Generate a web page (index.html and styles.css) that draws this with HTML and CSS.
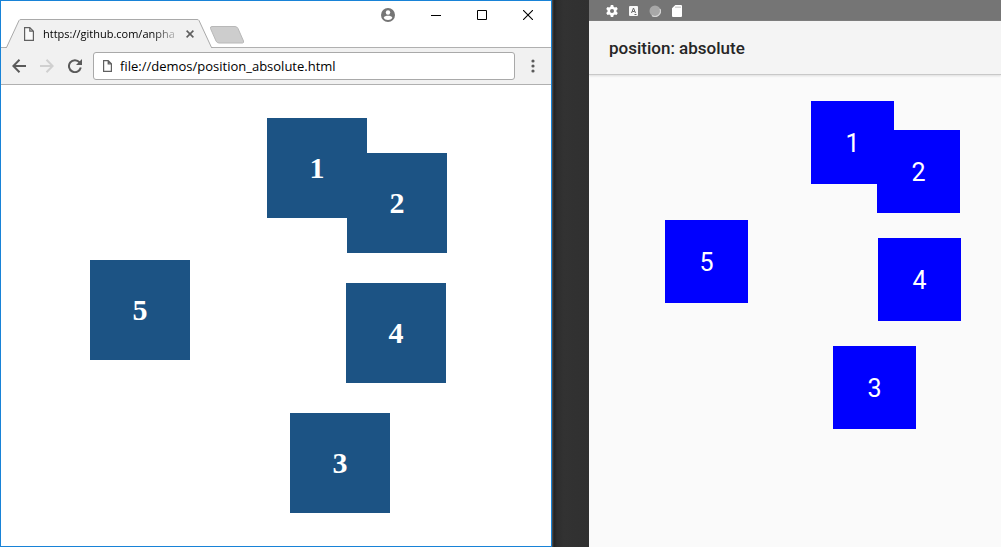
FILE: index.html
```html
<!DOCTYPE html>
<html lang="en">
<head>
<meta charset="utf-8">
<title>position: absolute</title>
<link rel="stylesheet" href="styles.css">
</head>
<body>
<main class="desktop">
  <section class="browser" aria-label="Browser">
    <header class="titlebar">
      <div class="tab">
        <svg class="tab-shape" width="208" height="29" viewBox="0 0 208 29" aria-hidden="true">
          <path d="M0 28.5H1.5L14 1.5Q14.5 .5 16 .5H192Q193.500 .5 194 1.500L206.500 28.500H208" fill="#f1f1f1" stroke="#a9a9a9"/>
          <path d="M2 28.500H206" stroke="#f1f1f1"/>
        </svg>
        <svg class="page-icon" width="10" height="14" viewBox="0 0 10 14" aria-hidden="true"><path d="M.6 .6H5.800L9.400 4.200V13.400H.6ZM5.800 .6V4.200H9.400" fill="#fafafa" stroke="#606060" stroke-width="1.200"/></svg>
        <span class="tab-title">https://github.com/anpha</span>
        <button class="icon-button tab-close" aria-label="Close tab"><svg width="8" height="8" viewBox="0 0 8 8"><path d="M.6 .6L7.400 7.400M7.400 .6L.6 7.400" stroke="#5f5f5f" stroke-width="1.600"/></svg></button>
      </div>
      <button class="icon-button new-tab" aria-label="New tab"><svg width="36" height="18" viewBox="0 0 36 18"><path d="M3 .5H26Q28 .5 29 2.500L34.500 15Q35 17 33.500 17H10Q8 17 7 15L1.500 2.500Q1 .5 3 .5Z" fill="#cdcdcd" stroke="#b8b8b8"/></svg></button>
      <div class="window-controls">
        <button class="icon-button control profile" aria-label="Profile"><svg width="14" height="14" viewBox="0 0 14 14"><circle cx="7" cy="7" r="7" fill="#757575"/><circle cx="7" cy="4.500" r="2.200" fill="#fff"/><path d="M2.700 9.800C3 8.200 5.200 7.800 7 7.800S11 8.200 11.300 9.800C10.500 11.200 9 12 7 12S3.500 11.200 2.700 9.800Z" fill="#fff"/></svg></button>
        <button class="icon-button control" aria-label="Minimize"><svg width="10" height="10" viewBox="0 0 10 10"><path d="M0 5.500H10" stroke="#000"/></svg></button>
        <button class="icon-button control" aria-label="Maximize"><svg width="10" height="10" viewBox="0 0 10 10"><path d="M.5 .5H9.500V9.500H.5Z" fill="none" stroke="#000"/></svg></button>
        <button class="icon-button control" aria-label="Close"><svg width="10" height="10" viewBox="0 0 10 10"><path d="M0 0L10 10M10 0L0 10" stroke="#000" stroke-width="1.100"/></svg></button>
      </div>
    </header>
    <nav class="toolbar" aria-label="Navigation">
      <button class="icon-button" aria-label="Back"><svg width="14" height="14" viewBox="0 0 14 14"><path d="M14 7H1.500M7.500 .8L1.300 7L7.500 13.200" fill="none" stroke="#5a5a5a" stroke-width="2"/></svg></button>
      <button class="icon-button" aria-label="Forward" disabled><svg width="14" height="14" viewBox="0 0 14 14"><path d="M0 7H12.500M6.500 .8L12.700 7L6.500 13.200" fill="none" stroke="#d0d0d0" stroke-width="2"/></svg></button>
      <button class="icon-button" aria-label="Reload"><svg width="14" height="14" viewBox="0 0 14 14"><path d="M11.600 3.300A6 6 0 1 0 12.800 8.600" fill="none" stroke="#5a5a5a" stroke-width="2"/><path d="M14 0V6H8Z" fill="#5a5a5a"/></svg></button>
      <label class="address">
        <svg width="9" height="12" viewBox="0 0 9 12" aria-hidden="true"><path d="M.6 .6H5.200L8.400 3.800V11.400H.6ZM5.200 .6V3.800H8.400" fill="#fff" stroke="#606060" stroke-width="1.200"/></svg>
        <input class="address-input" type="text" aria-label="Address" value="file://demos/position_absolute.html">
      </label>
      <button class="icon-button menu" aria-label="Menu"><svg width="4" height="14" viewBox="0 0 4 14" fill="#5a5a5a"><circle cx="2" cy="2" r="1.600"/><circle cx="2" cy="7" r="1.600"/><circle cx="2" cy="12" r="1.600"/></svg></button>
    </nav>
    <div class="stage">
      <div class="box box-1">1</div>
      <div class="box box-2">2</div>
      <div class="box box-3">3</div>
      <div class="box box-4">4</div>
      <div class="box box-5">5</div>
    </div>
  </section>
  <div class="divider"></div>
  <section class="phone" aria-label="Phone">
    <div class="status-bar">
      <svg width="12" height="12" viewBox="0 0 12 12"><path d="M4.800 0H7.200L7.600 1.700L8.800 2.400L10.500 1.900L11.800 4L10.500 5.200V6.800L11.800 8L10.500 10.100L8.800 9.600L7.600 10.300L7.200 12H4.800L4.400 10.300L3.200 9.600L1.500 10.100L.2 8L1.500 6.800V5.200L.2 4L1.500 1.900L3.200 2.400L4.400 1.700Z" fill="#fff"/><circle cx="6" cy="6" r="2" fill="#757575"/></svg>
      <svg width="9" height="10" viewBox="0 0 9 10"><rect width="9" height="10" rx="1" fill="#f8f8f8"/><path d="M2.500 7L4.500 2L6.500 7M3.300 5.500H5.700M5.500 8.500H7.500" fill="none" stroke="#666" stroke-width="1"/></svg>
      <svg width="12" height="12" viewBox="0 0 12 12"><circle cx="6" cy="6" r="5.500" fill="#a8a8a8"/><path d="M11 4A5.300 5.300 0 0 1 3 10.400" fill="none" stroke="#d4d4d4" stroke-width="1.200"/></svg>
      <svg width="10" height="12" viewBox="0 0 10 12"><path d="M3.300 0H9Q10 0 10 1V11Q10 12 9 12H1Q0 12 0 11V3.300Z" fill="#fff"/><path d="M4 1.500V3M6 1.500V3M8 1.500V3" stroke="#aaa"/></svg>
    </div>
    <header class="app-bar"><h1 class="app-title">position: absolute</h1></header>
    <div class="stage">
      <div class="tile tile-1">1</div>
      <div class="tile tile-2">2</div>
      <div class="tile tile-3">3</div>
      <div class="tile tile-4">4</div>
      <div class="tile tile-5">5</div>
    </div>
  </section>
</main>
</body>
</html>
```
FILE: styles.css
```css
* {
  box-sizing: border-box;
}

body {
  margin: 0;
}

.desktop {
  display: grid;
  grid-template-columns: minmax(0, 552fr) 37px minmax(0, 412fr);
  min-height: 100vh;
}

.browser {
  display: flex;
  flex-direction: column;
  background: #fff;
  border: 1px solid #1883d7;
  font-family: "Open Sans", "Noto Sans", sans-serif;
}

.icon-button {
  display: flex;
  align-items: center;
  justify-content: center;
  padding: 0;
  border: 0;
  background: none;
}

.titlebar {
  display: flex;
  align-items: flex-end;
  height: 47px;
  border-bottom: 1px solid #b0b0b0;
}

.tab {
  position: relative;
  display: flex;
  align-items: center;
  width: 208px;
  height: 29px;
  margin: 0 0 -1px 4px;
  padding: 0 19px;
}

.tab-shape {
  position: absolute;
  inset: 0;
}

.page-icon {
  position: relative;
  flex: none;
}

.tab-title {
  position: relative;
  flex: 1;
  margin: 0 4px 0 9px;
  white-space: nowrap;
  font-size: 11px;
  line-height: 18px;
  color: #000;
  mask-image: linear-gradient(to right, #000 78%, transparent);
}

.tab-close {
  position: relative;
}

.new-tab {
  margin: 0 0 3px -4px;
}

.window-controls {
  display: flex;
  align-self: flex-start;
  margin-left: auto;
}

.control {
  width: 46px;
  height: 28px;
}

.profile {
  width: 50px;
}

.toolbar {
  display: flex;
  align-items: center;
  gap: 14px;
  height: 37px;
  padding: 0 16px 0 11px;
  background: #f1f1f1;
  border-bottom: 1px solid #b0b0b0;
}

.address {
  display: flex;
  flex: 1;
  align-items: center;
  gap: 8px;
  height: 28px;
  margin-left: -3px;
  padding: 0 9px;
  background: #fff;
  border: 1px solid #a9a9a9;
  border-radius: 3px;
}

.address-input {
  flex: 1;
  min-width: 0;
  padding: 0;
  border: 0;
  outline: 0;
  background: none;
  font-family: inherit;
  font-size: 13px;
  line-height: 20px;
  color: #000;
}

.menu {
  margin-left: 2px;
}

.stage {
  position: relative;
  flex: 1;
  min-height: 440px;
}

.box,
.tile {
  position: absolute;
  display: flex;
  align-items: center;
  justify-content: center;
  color: #fff;
}

.box {
  width: 100px;
  height: 100px;
  background: #1c5384;
  font-family: "Liberation Serif", serif;
  font-size: 30px;
  font-weight: 700;
}

.box-1 { left: 266px; top: 33px; }
.box-2 { left: 346px; top: 68px; }
.box-3 { left: 289px; top: 328px; }
.box-4 { left: 345px; top: 198px; }
.box-5 { left: 89px; top: 175px; }

.divider {
  background: linear-gradient(to right, #555 0, #222 2px, #2d2d2d 5px, #323232 12px, #303030);
}

.phone {
  display: flex;
  flex-direction: column;
  overflow: hidden;
  background: #fafafa;
  font-family: Roboto, sans-serif;
}

.status-bar {
  display: flex;
  align-items: center;
  gap: 11px;
  height: 21px;
  padding-left: 17px;
  background: #757575;
}

.app-bar {
  display: flex;
  align-items: center;
  height: 54px;
  padding: 0 20px;
  background: #f4f4f4;
  border-bottom: 1px solid #c8c8c8;
  box-shadow: 0 1px 2px #ddd;
}

.app-title {
  margin: 0;
  font-size: 17px;
  font-weight: 500;
  color: #262626;
}

.tile {
  width: 83px;
  height: 83px;
  padding-top: 2px;
  background: #00f;
  font-size: 25px;
}

.tile-1 { left: 222px; top: 26px; }
.tile-2 { left: 288px; top: 55px; }
.tile-3 { left: 244px; top: 271px; }
.tile-4 { left: 289px; top: 163px; }
.tile-5 { left: 76px; top: 145px; }
```
